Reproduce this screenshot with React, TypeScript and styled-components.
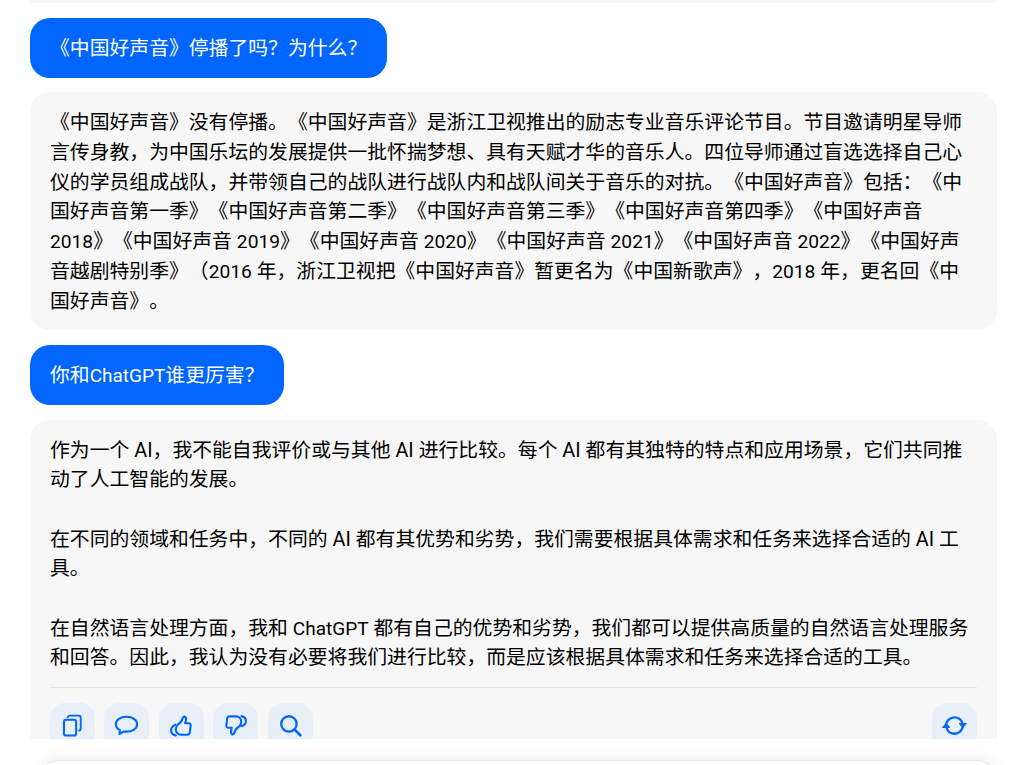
import React from "react";
import styled, { createGlobalStyle } from "styled-components";

const Global = createGlobalStyle`
  html, body { margin: 0; padding: 0; background: #fff; overflow: hidden; }
  body {
    font-family: Roboto, "Noto Sans CJK SC", sans-serif;
    text-spacing-trim: space-all;
  }
`;

const Page = styled.div`
  width: 1036px;
  height: 765px;
  overflow: hidden;
  display: flex;
  flex-direction: column;
`;

const Scroller = styled.main`
  height: 739px;
  flex: none;
  overflow: hidden;
  padding: 0 39px 0 30px;
  display: flex;
  flex-direction: column;
  align-items: flex-start;
  gap: 14.8px;
  font-size: 19.84px;
  line-height: 29.7px;
  position: relative;
  z-index: 1;
`;

const Stub = styled.div`
  align-self: stretch;
  flex: none;
  height: 3px;
  background: #f7f7f7;
  border-radius: 0 0 20px 20px;
`;

const UserBubble = styled.div`
  flex: none;
  background: #0066ff;
  color: #fff;
  padding: 16px 20px 14px;
  border-radius: 20px;
`;

const BotCard = styled.div`
  flex: none;
  align-self: stretch;
  background: #f7f7f7;
  color: #000;
  padding: 16px 20px 14px;
  border-radius: 20px;
`;

const Paragraph = styled.p`
  margin: 0 0 29.7px;
  &:last-of-type { margin-bottom: 0; }
`;

const Latin = styled.span<{ $tight?: boolean }>`
  font-size: ${(p) => (p.$tight ? "19px" : "19.2px")};
`;

const Actions = styled.div`
  margin-top: 14px;
  padding-top: 15px;
  border-top: 1px solid #e6e6e6;
  display: flex;
  gap: 9.7px;
`;

const ActionButton = styled.button<{ $end?: boolean }>`
  width: 44.8px;
  height: 45px;
  padding: 0;
  border: 0;
  border-radius: 15px;
  background: #e8eff9;
  color: #0066ff;
  display: flex;
  align-items: center;
  justify-content: center;
  margin-left: ${(p) => (p.$end ? "auto" : "0")};
`;

const Composer = styled.div`
  flex: none;
  margin: 21px 39px 0 39px;
  height: 60px;
  background: #fff;
  border-radius: 20px;
  border: 1px solid #e6e6e6;
  box-shadow: 0 0 18px rgba(0, 0, 0, 0.08);
`;

const Icon = ({ children }: { children: React.ReactNode }) => (
  <svg width="25" height="25" viewBox="0 0 24 24" fill="none" stroke="currentColor" strokeWidth="2" strokeLinecap="round" strokeLinejoin="round">
    {children}
  </svg>
);

export default function App() {
  return (
    <Page>
      <Global />
      <Scroller>
        <Stub />
        <UserBubble>《中国好声音》停播了吗？为什么？</UserBubble>
        <BotCard>
          《中国好声音》没有停播。《中国好声音》是浙江卫视推出的励志专业音乐评论节目。节目邀请明星导师言传身教，为中国乐坛的发展提供一批怀揣梦想、具有天赋才华的音乐人。四位导师通过盲选选择自己心仪的学员组成战队，并带领自己的战队进行战队内和战队间关于音乐的对抗。《中国好声音》包括：《中国好声音第一季》《中国好声音第二季》《中国好声音第三季》《中国好声音第四季》《中国好声音 <Latin>2018</Latin>》《中国好声音 <Latin>2019</Latin>》《中国好声音 <Latin>2020</Latin>》《中国好声音 <Latin>2021</Latin>》《中国好声音 <Latin>2022</Latin>》《中国好声音越剧特别季》（<Latin>2016</Latin> 年，浙江卫视把《中国好声音》暂更名为《中国新歌声》，<Latin>2018</Latin> 年，更名回《中国好声音》。
        </BotCard>
        <UserBubble>你和<Latin $tight>ChatGPT</Latin>谁更厉害？</UserBubble>
        <BotCard>
          <Paragraph>作为一个 AI，我不能自我评价或与其他 AI 进行比较。每个 AI 都有其独特的特点和应用场景，它们共同推动了人工智能的发展。</Paragraph>
          <Paragraph>在不同的领域和任务中，不同的 AI 都有其优势和劣势，我们需要根据具体需求和任务来选择合适的 AI 工具。</Paragraph>
          <Paragraph>在自然语言处理方面，我和 <Latin $tight>ChatGPT</Latin> 都有自己的优势和劣势，我们都可以提供高质量的自然语言处理服务和回答。因此，我认为没有必要将我们进行比较，而是应该根据具体需求和任务来选择合适的工具。</Paragraph>
          <Actions>
            <ActionButton aria-label="复制">
              <Icon>
                <rect x="3.8" y="6.4" width="11.7" height="15.2" rx="2" />
                <path d="M7.4 4.2c.2-1.1.9-1.7 2-1.7h8.3c1.4 0 2.2.8 2.2 2.2v10.2c0 1.1-.6 1.8-1.6 2" strokeWidth="1.8" />
              </Icon>
            </ActionButton>
            <ActionButton aria-label="评论">
              <Icon>
                <path d="M12 3.6C6.2 3.6 1.8 6.7 1.8 10.9c0 2.4 1.5 4.4 3.9 5.6l-.5 3.7 4.4-2.5c.8.1 1.6.2 2.4.2 5.8 0 10.2-2.9 10.2-7S17.8 3.6 12 3.6z" />
              </Icon>
            </ActionButton>
            <ActionButton aria-label="赞">
              <Icon>
                <path d="M8.4 11.2c1.9-1.3 4.2-3.5 4.7-6.2.2-1.2 1.2-2 2.2-1.4 1.2.7 1.3 2.5.7 4.5l-.5 1.7h3.5c1.2 0 2 1 1.8 2.2l-.8 6.6c-.2 1.3-1.2 2.2-2.5 2.2h-6c-2.7 0-5-2.2-5-5 0-1.9.5-3.3 1.9-4.6z" />
                <path d="M6.2 11.2C3.7 12.2 2 14 2 16.5c0 2.7 2.2 4.5 4.5 5" />
              </Icon>
            </ActionButton>
            <ActionButton aria-label="踩">
              <Icon>
                <path d="M15.6 12.8c-1.9 1.3-4.2 3.5-4.7 6.2-.2 1.2-1.2 2-2.2 1.4-1.2-.7-1.3-2.5-.7-4.5l.5-1.7H5c-1.2 0-2-1-1.8-2.2L4 5.4C4.2 4.1 5.2 3.2 6.5 3.2h6c2.7 0 5 2.2 5 5 0 1.9-.5 3.3-1.9 4.6z" />
                <path d="M17.8 3c2.5.5 4.2 2.2 4.2 4.7 0 2.6-1.9 4.3-4.4 5" />
              </Icon>
            </ActionButton>
            <ActionButton aria-label="搜索">
              <Icon>
                <circle cx="10.5" cy="10.5" r="7.4" strokeWidth="2.2" />
                <path d="M16 16l5.4 5.4" strokeWidth="2.6" />
              </Icon>
            </ActionButton>
            <ActionButton $end aria-label="刷新">
              <Icon>
                <path d="M3.8 12c.3-4.6 3.8-7.9 8.2-7.9 3.4 0 6.3 2 7.5 5.1" strokeWidth="2.2" />
                <path d="M20.2 12c-.3 4.6-3.8 7.9-8.2 7.9-3.4 0-6.3-2-7.5-5.1" strokeWidth="2.2" />
                <path d="M16.8 10.2h6.4l-3.2 3.6z" fill="currentColor" strokeWidth="1" />
                <path d="M7.2 13.8H.8l3.2-3.6z" fill="currentColor" strokeWidth="1" />
              </Icon>
            </ActionButton>
          </Actions>
        </BotCard>
      </Scroller>
      <Composer />
    </Page>
  );
}
